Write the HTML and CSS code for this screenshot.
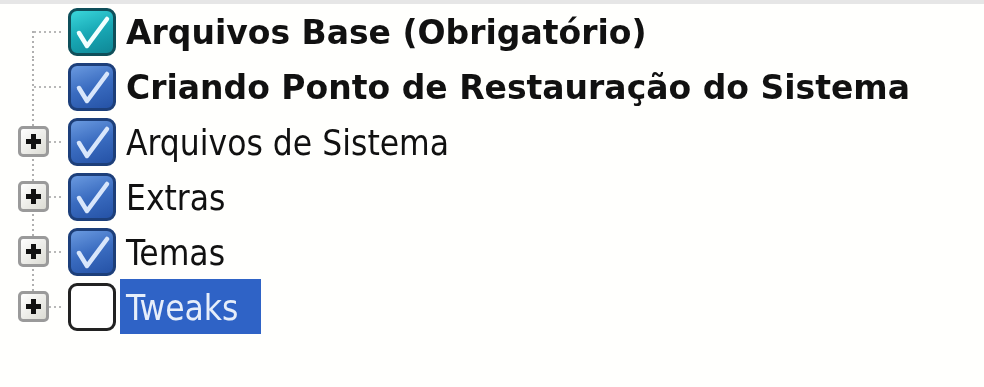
FILE: index.html
```html
<!DOCTYPE html>
<html lang="pt">
<head>
    <meta charset="UTF-8">
    <meta name="viewport" content="width=device-width, initial-scale=1.0">
    <title>Componentes</title>
    <link rel="stylesheet" href="styles.css">
</head>
<body>
    <div class="tree-panel">
        <ul class="tree">
            <!-- Itens obrigatórios -->
            <li class="tree-row first">
                <span class="branch"></span>
                <span class="check checked teal">
                    <svg viewBox="0 0 42 42"><polyline points="8,22 16,35 36,8"/></svg>
                </span>
                <span class="label bold">Arquivos Base (Obrigatório)</span>
            </li>
            <li class="tree-row">
                <span class="branch"></span>
                <span class="check checked">
                    <svg viewBox="0 0 42 42"><polyline points="8,22 16,35 36,8"/></svg>
                </span>
                <span class="label bold">Criando Ponto de Restauração do Sistema</span>
            </li>

            <!-- Grupos -->
            <li class="tree-row">
                <span class="branch"><span class="expander"></span></span>
                <span class="check checked">
                    <svg viewBox="0 0 42 42"><polyline points="8,22 16,35 36,8"/></svg>
                </span>
                <span class="label">Arquivos de Sistema</span>
            </li>
            <li class="tree-row">
                <span class="branch"><span class="expander"></span></span>
                <span class="check checked">
                    <svg viewBox="0 0 42 42"><polyline points="8,22 16,35 36,8"/></svg>
                </span>
                <span class="label">Extras</span>
            </li>
            <li class="tree-row">
                <span class="branch"><span class="expander"></span></span>
                <span class="check checked">
                    <svg viewBox="0 0 42 42"><polyline points="8,22 16,35 36,8"/></svg>
                </span>
                <span class="label">Temas</span>
            </li>
            <li class="tree-row last">
                <span class="branch"><span class="expander"></span></span>
                <span class="check"></span>
                <span class="label selected">Tweaks</span>
            </li>
        </ul>
    </div>
</body>
</html>
```

FILE: styles.css
```css
body {
    margin: 0;
    background-color: #fff;
    font-family: "DejaVu Sans Condensed", "DejaVu Sans", Tahoma, sans-serif;
}

.tree-panel {
    border-top: 4px solid #e6e6e6;
    height: 383px;
    background-color: #fffffd;
    filter: blur(0.5px);
}

.tree {
    list-style: none;
    margin: 0;
    padding: 0;
}

.tree-row {
    display: flex;
    align-items: center;
    height: 55px;
}

/* Linhas pontilhadas da árvore */
.branch {
    position: relative;
    width: 68px;
    height: 100%;
    flex-shrink: 0;
}

.branch::before {
    content: "";
    position: absolute;
    left: 32px;
    top: 0;
    bottom: 0;
    width: 2px;
    background-image: repeating-linear-gradient(to bottom, #b0b0b0 0 2px, transparent 2px 5px);
}

.first .branch::before {
    top: 27px;
}

.last .branch::before {
    bottom: 28px;
}

.branch::after {
    content: "";
    position: absolute;
    left: 34px;
    top: 27px;
    width: 28px;
    height: 2px;
    background-image: repeating-linear-gradient(to right, #b8b8b8 0 2px, transparent 2px 5px);
}

.expander {
    position: absolute;
    left: 18px;
    top: 12px;
    width: 25px;
    height: 25px;
    border: 3px solid #9a9a9a;
    border-radius: 5px;
    background: linear-gradient(135deg, #ffffff, #dcdcd4);
    z-index: 1;
}

.expander::before,
.expander::after {
    content: "";
    position: absolute;
    background-color: #111;
}

.expander::before {
    left: 5px;
    top: 10px;
    width: 15px;
    height: 5px;
}

.expander::after {
    left: 10px;
    top: 5px;
    width: 5px;
    height: 15px;
}

/* Caixas de seleção estilo XP */
.check {
    width: 42px;
    height: 42px;
    flex-shrink: 0;
    border: 3px solid #222;
    border-radius: 9px;
    background-color: #fff;
}

.check.checked {
    border-color: #1d3f7a;
    background: linear-gradient(160deg, #6a9ae0 0%, #3a6cc0 50%, #2552a6 100%);
}

.check.teal {
    border-color: #0f4f5a;
    background: linear-gradient(160deg, #3ad6da 0%, #18a8b5 50%, #0f8796 100%);
}

.check svg {
    display: block;
    width: 42px;
    height: 42px;
}

.check polyline {
    fill: none;
    stroke: #d8e6fb;
    stroke-width: 4.5;
    stroke-linecap: round;
    stroke-linejoin: round;
}

.check.teal polyline {
    stroke: #f2ffff;
}

.label {
    margin-left: 4px;
    padding: 3px 6px 0;
    font-size: 35px;
    line-height: 52px;
    color: #111;
    white-space: nowrap;
}

.label.bold {
    font-family: "DejaVu Sans", Tahoma, sans-serif;
    font-size: 33px;
    font-weight: bold;
}

.label.selected {
    padding-right: 22px;
    background-color: #2f63c6;
    color: #e6eefa;
}
```
